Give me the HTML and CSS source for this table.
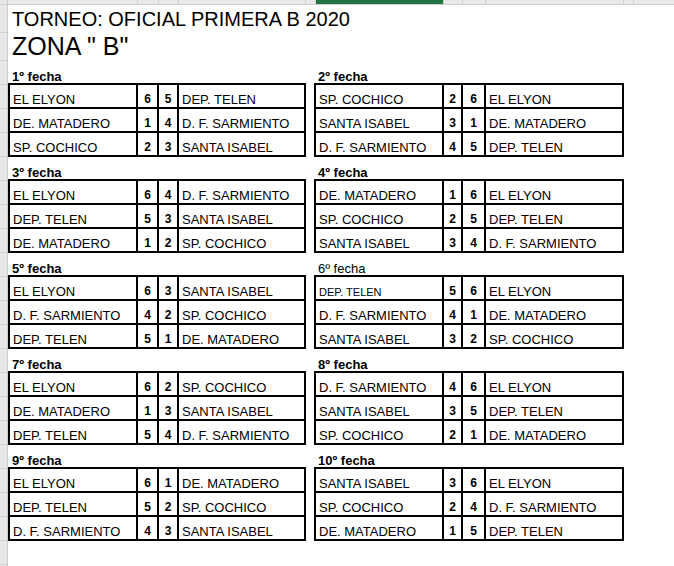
FILE: index.html
```html
<!DOCTYPE html>
<html lang="es">
<head>
<meta charset="utf-8">
<title>TORNEO: OFICIAL PRIMERA B 2020</title>
<link rel="stylesheet" href="styles.css">
</head>
<body>
<div class="sheet">
  <div class="corner"></div>
  <div class="colheads">
    <div class="ch w130"></div><div class="ch w21"></div><div class="ch w20"></div><div class="ch w127"></div><div class="ch w10"></div><div class="ch w128 sel"></div><div class="ch w19"></div><div class="ch w23"></div><div class="ch w138"></div><div class="ch w10"></div><div class="ch rest"></div>
  </div>
  <div class="rowheads">
    <div class="rh tall"></div><div class="rh tall"></div>
    <div class="rh"></div><div class="rh"></div><div class="rh"></div><div class="rh"></div><div class="rh"></div><div class="rh"></div><div class="rh"></div><div class="rh"></div><div class="rh"></div><div class="rh"></div><div class="rh"></div><div class="rh"></div><div class="rh"></div><div class="rh"></div><div class="rh"></div><div class="rh"></div><div class="rh"></div><div class="rh"></div><div class="rh"></div><div class="rh"></div><div class="rh"></div><div class="rh"></div>
  </div>
  <div class="content">
    <div class="title">TORNEO: OFICIAL PRIMERA B 2020</div>
    <div class="zone">ZONA " B"</div>
    <div class="blocks">
      <div class="block">
        <div class="label">1º fecha</div>
        <div class="tbl l">
          <div class="team">EL ELYON</div><div class="sc">6</div><div class="sc">5</div><div class="team">DEP. TELEN</div>
          <div class="team">DE. MATADERO</div><div class="sc">1</div><div class="sc">4</div><div class="team">D. F. SARMIENTO</div>
          <div class="team">SP. COCHICO</div><div class="sc">2</div><div class="sc">3</div><div class="team">SANTA ISABEL</div>
        </div>
      </div>
      <div class="block">
        <div class="label">2º fecha</div>
        <div class="tbl r">
          <div class="team">SP. COCHICO</div><div class="sc">2</div><div class="sc">6</div><div class="team">EL ELYON</div>
          <div class="team">SANTA ISABEL</div><div class="sc">3</div><div class="sc">1</div><div class="team">DE. MATADERO</div>
          <div class="team">D. F. SARMIENTO</div><div class="sc">4</div><div class="sc">5</div><div class="team">DEP. TELEN</div>
        </div>
      </div>
      <div class="block">
        <div class="label">3º fecha</div>
        <div class="tbl l">
          <div class="team">EL ELYON</div><div class="sc">6</div><div class="sc">4</div><div class="team">D. F. SARMIENTO</div>
          <div class="team">DEP. TELEN</div><div class="sc">5</div><div class="sc">3</div><div class="team">SANTA ISABEL</div>
          <div class="team">DE. MATADERO</div><div class="sc">1</div><div class="sc">2</div><div class="team">SP. COCHICO</div>
        </div>
      </div>
      <div class="block">
        <div class="label">4º fecha</div>
        <div class="tbl r">
          <div class="team">DE. MATADERO</div><div class="sc">1</div><div class="sc">6</div><div class="team">EL ELYON</div>
          <div class="team">SP. COCHICO</div><div class="sc">2</div><div class="sc">5</div><div class="team">DEP. TELEN</div>
          <div class="team">SANTA ISABEL</div><div class="sc">3</div><div class="sc">4</div><div class="team">D. F. SARMIENTO</div>
        </div>
      </div>
      <div class="block">
        <div class="label">5º fecha</div>
        <div class="tbl l">
          <div class="team">EL ELYON</div><div class="sc">6</div><div class="sc">3</div><div class="team">SANTA ISABEL</div>
          <div class="team">D. F. SARMIENTO</div><div class="sc">4</div><div class="sc">2</div><div class="team">SP. COCHICO</div>
          <div class="team">DEP. TELEN</div><div class="sc">5</div><div class="sc">1</div><div class="team">DE. MATADERO</div>
        </div>
      </div>
      <div class="block">
        <div class="label plain">6º fecha</div>
        <div class="tbl r">
          <div class="team small">DEP. TELEN</div><div class="sc">5</div><div class="sc">6</div><div class="team">EL ELYON</div>
          <div class="team">D. F. SARMIENTO</div><div class="sc">4</div><div class="sc">1</div><div class="team">DE. MATADERO</div>
          <div class="team">SANTA ISABEL</div><div class="sc">3</div><div class="sc">2</div><div class="team">SP. COCHICO</div>
        </div>
      </div>
      <div class="block">
        <div class="label">7º fecha</div>
        <div class="tbl l">
          <div class="team">EL ELYON</div><div class="sc">6</div><div class="sc">2</div><div class="team">SP. COCHICO</div>
          <div class="team">DE. MATADERO</div><div class="sc">1</div><div class="sc">3</div><div class="team">SANTA ISABEL</div>
          <div class="team">DEP. TELEN</div><div class="sc">5</div><div class="sc">4</div><div class="team">D. F. SARMIENTO</div>
        </div>
      </div>
      <div class="block">
        <div class="label">8º fecha</div>
        <div class="tbl r">
          <div class="team">D. F. SARMIENTO</div><div class="sc">4</div><div class="sc">6</div><div class="team">EL ELYON</div>
          <div class="team">SANTA ISABEL</div><div class="sc">3</div><div class="sc">5</div><div class="team">DEP. TELEN</div>
          <div class="team">SP. COCHICO</div><div class="sc">2</div><div class="sc">1</div><div class="team">DE. MATADERO</div>
        </div>
      </div>
      <div class="block">
        <div class="label">9º fecha</div>
        <div class="tbl l">
          <div class="team">EL ELYON</div><div class="sc">6</div><div class="sc">1</div><div class="team">DE. MATADERO</div>
          <div class="team">DEP. TELEN</div><div class="sc">5</div><div class="sc">2</div><div class="team">SP. COCHICO</div>
          <div class="team">D. F. SARMIENTO</div><div class="sc">4</div><div class="sc">3</div><div class="team">SANTA ISABEL</div>
        </div>
      </div>
      <div class="block">
        <div class="label">10º fecha</div>
        <div class="tbl r">
          <div class="team">SANTA ISABEL</div><div class="sc">3</div><div class="sc">6</div><div class="team">EL ELYON</div>
          <div class="team">SP. COCHICO</div><div class="sc">2</div><div class="sc">4</div><div class="team">D. F. SARMIENTO</div>
          <div class="team">DE. MATADERO</div><div class="sc">1</div><div class="sc">5</div><div class="team">DEP. TELEN</div>
        </div>
      </div>
    </div>
  </div>
</div>
</body>
</html>
```
FILE: styles.css
```css
html, body {
  margin: 0;
  padding: 0;
  background: #ffffff;
}
body {
  font-family: "Liberation Sans", Arial, sans-serif;
  color: #000000;
}
.sheet {
  display: grid;
  grid-template-columns: 8px 666px;
  grid-template-rows: 5px 561px;
  width: 674px;
  height: 566px;
  overflow: hidden;
}
.corner {
  background: #e8e8e8;
  border-right: 1px solid #cfcfcf;
  border-bottom: 1px solid #cfcfcf;
  box-sizing: border-box;
}
.colheads {
  display: flex;
  background: #e8e8e8;
  border-bottom: 1px solid #cfcfcf;
  box-sizing: border-box;
}
.ch {
  flex: none;
  box-sizing: border-box;
  border-right: 1px solid #cfcfcf;
}
.ch.sel {
  background: #217346;
}
.w130 { width: 130px; }
.w21 { width: 21px; }
.w20 { width: 20px; }
.w127 { width: 127px; }
.w10 { width: 10px; }
.w128 { width: 128px; }
.w19 { width: 19px; }
.w23 { width: 23px; }
.w138 { width: 138px; }
.ch.rest { flex: 1; border-right: none; }
.rowheads {
  display: flex;
  flex-direction: column;
  background: #e8e8e8;
  border-right: 1px solid #cfcfcf;
  box-sizing: border-box;
  overflow: hidden;
}
.rh {
  flex: none;
  height: 24px;
  box-sizing: border-box;
  border-bottom: 1px solid #cfcfcf;
}
.rh.tall { height: 28px; }
.content {
  overflow: hidden;
}
.title {
  height: 28px;
  box-sizing: border-box;
  display: flex;
  align-items: flex-end;
  padding: 0 0 4px 4px;
  font-size: 20px;
  line-height: 1;
}
.zone {
  height: 28px;
  box-sizing: border-box;
  display: flex;
  align-items: flex-end;
  padding: 0 0 2px 4px;
  font-size: 25px;
  line-height: 1;
}
.blocks {
  display: grid;
  grid-template-columns: 298px 310px;
  column-gap: 8px;
}
.label {
  height: 22px;
  box-sizing: border-box;
  display: flex;
  align-items: flex-end;
  padding: 0 0 0 4px;
  font-size: 13px;
  font-weight: bold;
  line-height: 1;
}
.label.plain {
  font-weight: normal;
}
.tbl {
  display: grid;
  border-left: 2px solid #000;
  border-top: 2px solid #000;
  grid-auto-rows: 24px;
}
.tbl.l { grid-template-columns: 128px 21px 20px 127px; }
.tbl.r { grid-template-columns: 128px 19px 23px 138px; }
.team, .sc {
  box-sizing: border-box;
  border-right: 2px solid #000;
  border-bottom: 2px solid #000;
  display: flex;
  align-items: flex-end;
  line-height: 1;
  white-space: nowrap;
  overflow: hidden;
}
.team {
  padding: 0 0 1px 3px;
  font-size: 13px;
}
.team.small {
  font-size: 11px;
}
.sc {
  justify-content: center;
  padding: 0 0 2px 0;
  font-size: 12px;
  font-weight: bold;
}
```
